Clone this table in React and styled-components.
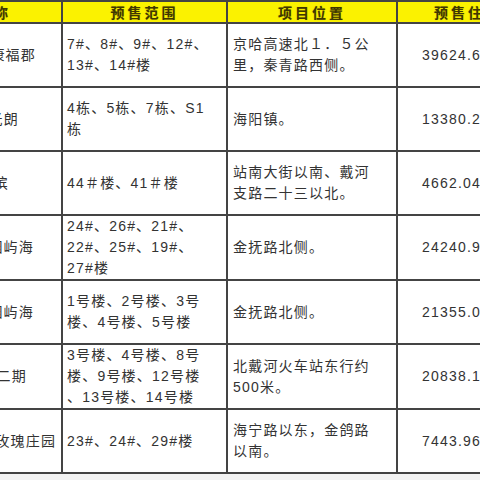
import React from 'react';
import styled, { createGlobalStyle } from 'styled-components';

const GlobalStyle = createGlobalStyle`
  html, body {
    margin: 0;
    padding: 0;
    background: #f4f4f4;
    overflow: hidden;
  }
`;

const Sheet = styled.div`
  width: 480px;
  height: 480px;
  overflow: hidden;
  background: #f4f4f4;
`;

const Table = styled.table`
  margin-left: -113px;
  border-collapse: collapse;
  table-layout: fixed;
  width: 685px;
  background: #ffffff;
  font-family: 'Liberation Sans', 'Noto Sans CJK SC', sans-serif;
  font-size: 14px;
  color: #333333;
`;

const HeadCell = styled.th`
  height: 20px;
  padding: 0 ${(p) => p.$inset || 0}px 0 0;
  border: 2px solid #444444;
  background: #fbf200;
  color: #403800;
  font-family: 'Noto Sans CJK SC', sans-serif;
  font-size: 14px;
  font-weight: 700;
  letter-spacing: 3px;
  text-align: ${(p) => p.$align || 'center'};
  line-height: 18px;
  text-shadow: 0 0 1px #c2b200;
  white-space: nowrap;
  overflow: hidden;
`;

const Cell = styled.td`
  height: 62px;
  padding: 0 ${(p) => p.$right || 0}px 0 ${(p) => p.$pad || 0}px;
  border: 2px solid #444444;
  text-align: ${(p) => p.$align || 'left'};
  vertical-align: middle;
  line-height: 21px;
  letter-spacing: 1.2px;
  white-space: nowrap;
  overflow: hidden;
`;

const columns = [174, 165, 170, 176];

// nameEnd: where the (cut off) project name ends in the first column
const rows = [
  {
    name: '北戴河新区康福郡',
    nameEnd: 36,
    range: ['7#、8#、9#、12#、', '13#、14#楼'],
    place: ['京哈高速北１．５公', '里，秦青路西侧。'],
    area: '39624.67',
  },
  {
    name: '海港区阳光朗',
    nameEnd: 19,
    range: ['4栋、5栋、7栋、S1', '栋'],
    place: ['海阳镇。'],
    area: '13380.25',
  },
  {
    name: '北戴河海滨',
    nameEnd: 9,
    range: ['44＃楼、41＃楼'],
    place: ['站南大街以南、戴河', '支路二十三以北。'],
    area: '4662.04',
  },
  {
    name: '抚宁区碧桂园屿海',
    nameEnd: 34,
    range: ['24#、26#、21#、', '22#、25#、19#、', '27#楼'],
    place: ['金抚路北侧。'],
    area: '24240.91',
  },
  {
    name: '抚宁区碧桂园屿海',
    nameEnd: 34,
    range: ['1号楼、2号楼、3号', '楼、4号楼、5号楼'],
    place: ['金抚路北侧。'],
    area: '21355.08',
  },
  {
    name: '北戴河首府二期',
    nameEnd: 27,
    range: ['3号楼、4号楼、8号', '楼、9号楼、12号楼', '、13号楼、14号楼'],
    place: ['北戴河火车站东行约', '500米。'],
    area: '20838.12',
  },
  {
    name: '海宁路香格里拉玫瑰庄园',
    nameEnd: 53,
    range: ['23#、24#、29#楼'],
    place: ['海宁路以东，金鸽路', '以南。'],
    area: '7443.96',
  },
];

const Lines = ({ lines }) =>
  lines.map((line, i) => (
    <React.Fragment key={i}>
      {i > 0 && <br />}
      {line}
    </React.Fragment>
  ));

export default function App() {
  return (
    <Sheet>
      <GlobalStyle />
      <Table>
        <colgroup>
          {columns.map((w, i) => (
            <col key={i} style={{ width: `${w}px` }} />
          ))}
        </colgroup>
        <thead>
          <tr>
            <HeadCell $align='right' $inset={50}>
              项目名称
            </HeadCell>
            <HeadCell>预售范围</HeadCell>
            <HeadCell>项目位置</HeadCell>
            <HeadCell>预售住宅面积</HeadCell>
          </tr>
        </thead>
        <tbody>
          {rows.map((row, i) => (
            <tr key={i}>
              <Cell $align='right' $right={61 - row.nameEnd}>
                {row.name}
              </Cell>
              <Cell $pad={4}>
                <Lines lines={row.range} />
              </Cell>
              <Cell $pad={5}>
                <Lines lines={row.place} />
              </Cell>
              <Cell $pad={24}>{row.area}</Cell>
            </tr>
          ))}
        </tbody>
      </Table>
    </Sheet>
  );
}
